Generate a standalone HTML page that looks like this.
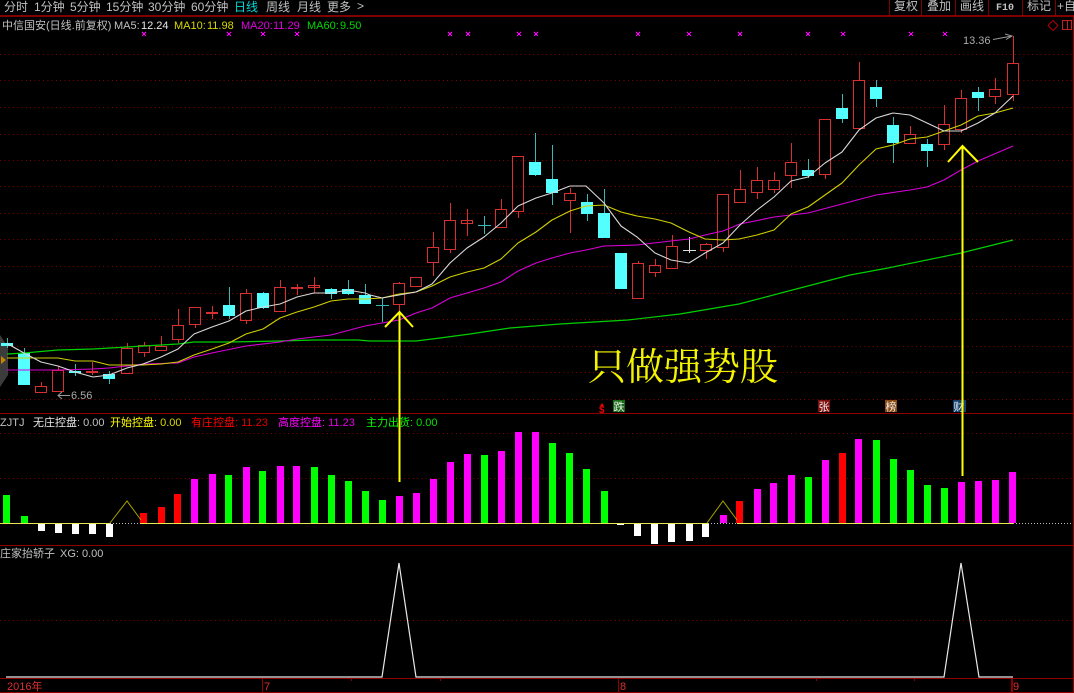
<!DOCTYPE html>
<html><head><meta charset="utf-8"><title>中信国安</title>
<style>
html,body{margin:0;padding:0;background:#000;width:1074px;height:693px;overflow:hidden}
svg{display:block}
text{font-family:"Liberation Sans","Noto Sans CJK SC",sans-serif;font-size:11px;fill:#c0c0c0}
.m{font-size:12px}
</style></head><body>
<svg width="1074" height="693" viewBox="0 0 1074 693" xmlns="http://www.w3.org/2000/svg">
<rect width="1074" height="693" fill="#000"/>
<!-- dotted grid -->
<g stroke="#800000" stroke-dasharray="1 3.3" shape-rendering="crispEdges" fill="none">
<path d="M0 54.5H1073M0 80.5H1073M0 107.5H1073M0 134.5H1073M0 160.5H1073M0 186.5H1073M0 213.5H1073M0 239.5H1073M0 266.5H1073M0 293.5H1073M0 319.5H1073M0 346.5H1073M0 372.5H1073M0 399.5H1073M0 433.5H1073M0 478.5H1073M0 620.5H1073"/>
</g>
<!-- solid frame -->
<g shape-rendering="crispEdges" fill="none" stroke="#900000">
<path d="M0 15.5H1074M0 16.5H1074" stroke="#800000"/>
<path d="M0 413.5H1074M0 545.5H1074M0 678.5H1074M0 692.5H1074M1073.5 16V693"/>
<path d="M889.5 0V15M921.5 0V15M955.5 0V15M988.5 0V15M1022.5 0V15M1055.5 0V15" stroke="#800000"/>
<path d="M262.5 678V692M618.5 678V692M1011.5 678V692M1012.5 678V692M351.5 679V681M440.5 679V681M816.5 679V681M914.5 679V681"/>
</g>
<!-- left pane handle -->
<polygon points="0,335 8,347 8,375 0,387" fill="#3c3c3c"/>
<polygon points="1,356 6,360 1,364" fill="#c88400"/>
<!-- candles -->
<g shape-rendering="crispEdges" fill="none">
<path stroke="#d83030" d="M41.5 382V386M58.5 366V370M92.5 362V375M127.5 343V348M144.5 342V345M144.5 353V357M161.5 336V346M178.5 309V325M178.5 340V343M195.5 325V328M212.5 306V319M246.5 289V293M246.5 321V324M280.5 280V287M297.5 284V295M314.5 277V293M399.5 282V283M399.5 305V312M433.5 232V247M433.5 263V276M450.5 203V220M450.5 250V253M467.5 209V236M501.5 199V209M518.5 212V218M570.5 188V193M570.5 201V233M638.5 261V263M655.5 259V265M655.5 273V277M672.5 235V246M706.5 243V244M706.5 251V259M723.5 248V252M740.5 170V189M757.5 167V180M757.5 193V199M774.5 172V180M774.5 190V193M791.5 143V162M791.5 176V188M825.5 175V179M859.5 62V80M910.5 126V134M944.5 105V124M944.5 145V150M961.5 90V98M961.5 130V133M995.5 78V89M995.5 97V104M1013.5 36V63M1013.5 95V101"/>
<path stroke="#d83030" d="M35.5 386.5h11V392.5h-11zM52.5 370.5h11V391.5h-11zM86.5 371.5h11V372.5h-11zM121.5 348.5h11V373.5h-11zM138.5 345.5h11V352.5h-11zM155.5 346.5h11V350.5h-11zM172.5 325.5h11V339.5h-11zM189.5 307.5h11V324.5h-11zM206.5 312.5h11V313.5h-11zM240.5 293.5h11V320.5h-11zM274.5 287.5h11V311.5h-11zM291.5 287.5h11V288.5h-11zM308.5 285.5h11V287.5h-11zM393.5 283.5h11V304.5h-11zM410.5 277.5h11V286.5h-11zM427.5 247.5h11V262.5h-11zM444.5 220.5h11V249.5h-11zM461.5 220.5h11V223.5h-11zM495.5 209.5h11V227.5h-11zM512.5 156.5h11V211.5h-11zM564.5 193.5h11V200.5h-11zM632.5 263.5h11V298.5h-11zM649.5 265.5h11V272.5h-11zM666.5 246.5h11V268.5h-11zM700.5 244.5h11V250.5h-11zM717.5 194.5h11V247.5h-11zM734.5 189.5h11V202.5h-11zM751.5 180.5h11V192.5h-11zM768.5 180.5h11V189.5h-11zM785.5 162.5h11V175.5h-11zM819.5 119.5h11V174.5h-11zM853.5 80.5h11V128.5h-11zM904.5 134.5h11V143.5h-11zM938.5 124.5h11V144.5h-11zM955.5 98.5h11V129.5h-11zM989.5 89.5h11V96.5h-11zM1007.5 63.5h11V94.5h-11z"/>
<path stroke="#38b8b8" d="M7.5 338V348M24.5 348V353M75.5 364V376M109.5 371V384M229.5 287V319M263.5 292V309M331.5 288V299M348.5 280V295M365.5 284V295M382.5 298V322M376 305.5H389M484.5 216V234M478 225.5H491M535.5 133V176M552.5 145V205M587.5 194V221M604.5 189V238M808.5 159V178M842.5 94V123M876.5 80V107M893.5 117V163M927.5 139V167M978.5 87V111"/>
<path stroke="none" fill="#54ffff" d="M1 343h12v3h-12zM18 353h12V385h-12zM69 371h12V373h-12zM103 374h12V379h-12zM223 305h12V316h-12zM257 293h12V308h-12zM325 289h12V294h-12zM342 289h12V294h-12zM359 295h12V304h-12zM529 162h12V175h-12zM546 179h12V193h-12zM581 202h12V214h-12zM598 213h12V238h-12zM615 253h12V289h-12zM802 170h12V176h-12zM836 108h12V119h-12zM870 87h12V99h-12zM887 125h12V143h-12zM921 144h12V151h-12zM972 92h12V98h-12z"/>
<path stroke="#e0e0e0" d="M689.5 237V253M683 250.5H696"/>
</g>
<!-- moving averages -->
<g fill="none" stroke-width="1" stroke-linejoin="round">
<polyline stroke="#00d000" stroke-width="1.2" points="7,354 24,353 58,350 93,349 127,347 178,344 194,342 229,342 280,341 314,340 358,340 370,341 416,341 440,338 470,334 510,328 560,324 628,320 680,314 739,304 800,288 850,275 888,268 961,253 1013,240"/>
<polyline stroke="#d800d8" stroke-width="1.1" points="7,370 24,370 58,370 93,369 109,368 127,366 143,364 178,363 194,357 212,353 246,346 280,342 297,339 331,335 365,326 399,320 416,313 432,308 450,298 484,288 501,282 518,271 536,263 552,258 570,253 586,250 604,246 637,245 671,241 689,239 705,235 723,231 740,224 774,217 808,213 842,204 876,195 910,190 927,187 944,180 961,170 978,161 1013,146"/>
<polyline stroke="#d0d000" stroke-width="1.1" points="7,358 24,358 41,358 58,358 75,361 93,361 109,365 127,365 143,365 161,364 178,362 194,355 212,349 229,343 246,334 263,329 280,318 297,312 314,307 331,301 348,299 365,299 382,298 399,294 416,292 432,286 450,277 467,272 484,268 501,259 518,243 536,232 552,220 570,211 586,206 604,205 621,212 637,216 655,219 671,223 689,232 705,239 723,240 739,239 757,235 774,230 791,214 808,207 825,195 842,183 859,165 876,149 893,145 910,139 927,137 944,131 961,125 978,116 995,113 1013,108"/>
<polyline stroke="#d8d8d8" stroke-width="1.1" points="7,343.5 24,353 41,362 58,366 75,372 93,377 109,375 127,368 143,364 161,357 178,349 194,334 212,327 229,321 246,311 263,307 280,304 297,297 314,293 331,293 348,290 365,293 370,295 382,298 399,295 416,292 432,284 450,263 467,248 484,237 501,223 518,206 536,198 552,193 570,186 586,186 604,203 621,226 637,237 655,253 671,260 689,263 705,253 723,243 740,225 757,210 774,197 791,181 808,177 825,163 842,152 859,130 876,118 893,113 910,115 927,123 944,131 961,131 978,123 995,113 1013,96"/>
</g>
<!-- magenta x marks -->
<path fill="none" stroke="#ff00ff" shape-rendering="crispEdges" d="M142 32l4 4m0-4l-4 4M227 32l4 4m0-4l-4 4M261 32l4 4m0-4l-4 4M295 32l4 4m0-4l-4 4M448 32l4 4m0-4l-4 4M466 32l4 4m0-4l-4 4M517 32l4 4m0-4l-4 4M534 32l4 4m0-4l-4 4M636 32l4 4m0-4l-4 4M687 32l4 4m0-4l-4 4M738 32l4 4m0-4l-4 4M806 32l4 4m0-4l-4 4M841 32l4 4m0-4l-4 4M909 32l4 4m0-4l-4 4M943 32l4 4m0-4l-4 4"/>
<!-- indicator bars -->
<g shape-rendering="crispEdges" stroke="none">
<path fill="#00ff00" d="M3 495h7V523h-7zM21 516h7V523h-7zM225 475h7V523h-7zM259 471h7V523h-7zM311 467h7V523h-7zM328 475h7V523h-7zM345 481h7V523h-7zM362 491h7V523h-7zM379 500h7V523h-7zM481 455h7V523h-7zM549 443h7V523h-7zM566 453h7V523h-7zM583 469h7V523h-7zM601 491h7V523h-7zM805 477h7V523h-7zM873 440h7V523h-7zM890 459h7V523h-7zM907 470h7V523h-7zM924 485h7V523h-7zM941 488h7V523h-7z"/>
<path fill="#ff0000" d="M140 513h7V523h-7zM158 507h7V523h-7zM174 494h7V523h-7zM736 501h7V523h-7zM839 453h7V523h-7z"/>
<path fill="#ff00ff" d="M191 479h7V523h-7zM209 474h7V523h-7zM243 467h7V523h-7zM277 466h7V523h-7zM293 466h7V523h-7zM396 496h7V523h-7zM413 493h7V523h-7zM430 479h7V523h-7zM447 462h7V523h-7zM464 454h7V523h-7zM498 451h7V523h-7zM515 432h7V523h-7zM532 432h7V523h-7zM720 515h7V523h-7zM754 489h7V523h-7zM770 483h7V523h-7zM788 475h7V523h-7zM822 460h7V523h-7zM855 439h7V523h-7zM958 482h7V523h-7zM975 481h7V523h-7zM992 480h7V523h-7zM1009 472h7V523h-7z"/>
<path fill="#ffffff" d="M38 524h7V531h-7zM55 524h7V533h-7zM72 524h7V534h-7zM89 524h7V534h-7zM106 524h7V537h-7zM617 524h7V525h-7zM634 524h7V536h-7zM651 524h7V544h-7zM668 524h7V542h-7zM686 524h7V541h-7zM702 524h7V537h-7z"/>
</g>
<g fill="none" shape-rendering="crispEdges">
<path stroke="#e8e850" d="M0 523.5H110M140 523.5H708M737 523.5H1013"/>
<path stroke="#bbb" stroke-dasharray="1 2" d="M110 523.5H140M708 523.5H737M1013 523.5H1073"/>
</g>
<path fill="none" stroke="#a8a000" d="M110 523L127 501L141 520M707 523L723 501L737 520"/>
<!-- panel 3 -->
<path fill="none" stroke="#e8e8e8" stroke-width="1.2" d="M6 677H382L399 563L416 677H944L961 563L979 677H1013"/>
<!-- yellow arrows -->
<g fill="none" stroke="#ffff00" stroke-width="2">
<path d="M399.5 482V313M385 327L399.5 312L413 327"/>
<path d="M962.5 476V147M948 162L962.5 146L978 162"/>
</g>
<!-- top-right icons -->
<g fill="none" stroke="#b00000">
<path d="M1053 20.5L1058 25.5L1053 30.5L1048 25.5z"/>
<path shape-rendering="crispEdges" d="M1062.5 20.5h9v9h-9zM1067.5 20V30" stroke="#c02020"/>
</g>
<!-- annotation arrows -->
<g fill="none" stroke="#999">
<path d="M993 39.5L1012 36M1005 34L1012 36L1006 39.5"/>
<path d="M58 395.5H70M62 392L58 395.5L62 399"/>
</g>
<!-- menu -->
<g class="m">
<text class="m" x="4" y="11">分时</text>
<text class="m" x="34" y="11">1分钟</text>
<text class="m" x="70" y="11">5分钟</text>
<text class="m" x="106" y="11">15分钟</text>
<text class="m" x="148" y="11">30分钟</text>
<text class="m" x="191" y="11">60分钟</text>
<text class="m" x="234" y="11" style="fill:#00d8d8">日线</text>
<text class="m" x="266" y="11">周线</text>
<text class="m" x="297" y="11">月线</text>
<text class="m" x="327" y="11">更多</text>
<text class="m" x="357" y="10">&gt;</text>
<text class="m" x="894" y="10">复权</text>
<text class="m" x="927" y="10">叠加</text>
<text class="m" x="960" y="10">画线</text>
<text x="996" y="10" style="font-family:'Liberation Mono',monospace;font-size:10px;font-weight:bold">F10</text>
<text class="m" x="1027" y="10">标记</text>
<text class="m" x="1057" y="10">+自</text>
</g>
<!-- info line -->
<text x="2" y="29">中信国安(日线.前复权)</text>
<text x="114" y="29">MA5:</text><text x="141" y="29" style="fill:#e8e8e8">12.24</text>
<text x="174" y="29" style="fill:#d8d800">MA10:</text><text x="207" y="29" style="fill:#d8d800">11.98</text>
<text x="241" y="29" style="fill:#e000e0">MA20:</text><text x="273" y="29" style="fill:#e000e0">11.29</text>
<text x="307" y="29" style="fill:#00d800">MA60:</text><text x="340" y="29" style="fill:#00d800">9.50</text>
<!-- indicator titles -->
<text x="0" y="426">ZJTJ</text>
<text x="33" y="426" style="fill:#e8e8e8">无庄控盘</text><text x="77" y="426">: 0.00</text>
<text x="110" y="426" style="fill:#ffff00">开始控盘</text><text x="154" y="426" style="fill:#d8d800">: 0.00</text>
<text x="191" y="426" style="fill:#ff0000">有庄控盘</text><text x="235" y="426" style="fill:#e00000">: 11.23</text>
<text x="278" y="426" style="fill:#ff00ff">高度控盘</text><text x="322" y="426" style="fill:#e000e0">: 11.23</text>
<text x="366" y="426" style="fill:#00ff00">主力出货</text><text x="410" y="426" style="fill:#00e000">: 0.00</text>
<text x="0" y="557">庄家抬轿子</text><text x="60" y="557">XG: 0.00</text>
<!-- price labels -->
<text x="963" y="44" style="fill:#aaa">13.36</text>
<text x="71" y="399" style="fill:#aaa">6.56</text>
<!-- big slogan -->
<text x="588" y="380" style="font-family:'Noto Serif CJK SC','Liberation Serif',serif;font-size:38px;fill:#f4f400">只做强势股</text>
<!-- event badges -->
<path fill="#f00000" d="M600 406L602 403L604 406z"/>
<text x="599" y="413" style="font-size:10px;font-weight:bold;fill:#f00000">$</text>
<rect x="613" y="400" width="12" height="12" fill="#146c14"/><text x="613.5" y="410.5" style="font-size:11px;fill:#eee">跌</text>
<rect x="818" y="400" width="12" height="12" fill="#801010"/><text x="818.5" y="410.5" style="font-size:11px;fill:#eee">张</text>
<rect x="885" y="400" width="12" height="12" fill="#8a4a10"/><text x="885.5" y="410.5" style="font-size:11px;fill:#eee">榜</text>
<rect x="953" y="400" width="13" height="12" fill="#104070"/><text x="953.5" y="410.5" style="font-size:11px;fill:#eee">财</text>
<path fill="none" stroke="#ffff00" stroke-width="2" d="M962.5 395V413"/>
<!-- time axis -->
<text x="7" y="690" style="fill:#d83030">2016年</text>
<text x="264" y="690" style="fill:#d83030">7</text>
<text x="620" y="690" style="fill:#d83030">8</text>
<text x="1013" y="690" style="fill:#d83030">9</text>
</svg>
</body></html>
